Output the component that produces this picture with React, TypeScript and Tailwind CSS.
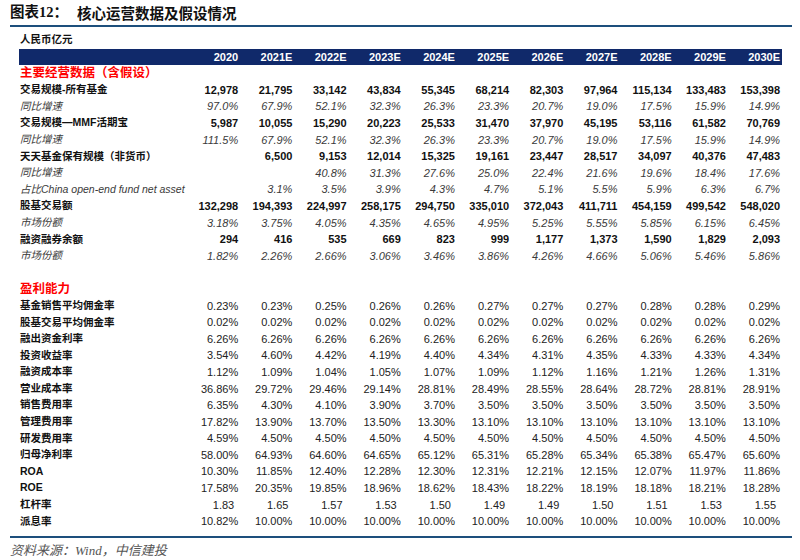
import React from 'react'

type Kind = 'bold' | 'italic' | 'plain' | 'lev'

interface Row {
  label: string
  kind: Kind
  values: string[]
}

const years = ['2020', '2021E', '2022E', '2023E', '2024E', '2025E', '2026E', '2027E', '2028E', '2029E', '2030E']

const rep = (v: string, n: number) => Array(n).fill(v)

const opsRows: Row[] = [
  { label: '交易规模-所有基金', kind: 'bold', values: ['12,978', '21,795', '33,142', '43,834', '55,345', '68,214', '82,303', '97,964', '115,134', '133,483', '153,398'] },
  { label: '同比增速', kind: 'italic', values: ['97.0%', '67.9%', '52.1%', '32.3%', '26.3%', '23.3%', '20.7%', '19.0%', '17.5%', '15.9%', '14.9%'] },
  { label: '交易规模—MMF活期宝', kind: 'bold', values: ['5,987', '10,055', '15,290', '20,223', '25,533', '31,470', '37,970', '45,195', '53,116', '61,582', '70,769'] },
  { label: '同比增速', kind: 'italic', values: ['111.5%', '67.9%', '52.1%', '32.3%', '26.3%', '23.3%', '20.7%', '19.0%', '17.5%', '15.9%', '14.9%'] },
  { label: '天天基金保有规模（非货币）', kind: 'bold', values: ['', '6,500', '9,153', '12,014', '15,325', '19,161', '23,447', '28,517', '34,097', '40,376', '47,483'] },
  { label: '同比增速', kind: 'italic', values: ['', '', '40.8%', '31.3%', '27.6%', '25.0%', '22.4%', '21.6%', '19.6%', '18.4%', '17.6%'] },
  { label: '占比China open-end fund net asset', kind: 'italic', values: ['', '3.1%', '3.5%', '3.9%', '4.3%', '4.7%', '5.1%', '5.5%', '5.9%', '6.3%', '6.7%'] },
  { label: '股基交易额', kind: 'bold', values: ['132,298', '194,393', '224,997', '258,175', '294,750', '335,010', '372,043', '411,711', '454,159', '499,542', '548,020'] },
  { label: '市场份额', kind: 'italic', values: ['3.18%', '3.75%', '4.05%', '4.35%', '4.65%', '4.95%', '5.25%', '5.55%', '5.85%', '6.15%', '6.45%'] },
  { label: '融资融券余额', kind: 'bold', values: ['294', '416', '535', '669', '823', '999', '1,177', '1,373', '1,590', '1,829', '2,093'] },
  { label: '市场份额', kind: 'italic', values: ['1.82%', '2.26%', '2.66%', '3.06%', '3.46%', '3.86%', '4.26%', '4.66%', '5.06%', '5.46%', '5.86%'] },
]

const profitRows: Row[] = [
  { label: '基金销售平均佣金率', kind: 'plain', values: ['0.23%', '0.23%', '0.25%', '0.26%', '0.26%', '0.27%', '0.27%', '0.27%', '0.28%', '0.28%', '0.29%'] },
  { label: '股基交易平均佣金率', kind: 'plain', values: rep('0.02%', 11) },
  { label: '融出资金利率', kind: 'plain', values: rep('6.26%', 11) },
  { label: '投资收益率', kind: 'plain', values: ['3.54%', '4.60%', '4.42%', '4.19%', '4.40%', '4.34%', '4.31%', '4.35%', '4.33%', '4.33%', '4.34%'] },
  { label: '融资成本率', kind: 'plain', values: ['1.12%', '1.09%', '1.04%', '1.05%', '1.07%', '1.09%', '1.12%', '1.16%', '1.21%', '1.26%', '1.31%'] },
  { label: '营业成本率', kind: 'plain', values: ['36.86%', '29.72%', '29.46%', '29.14%', '28.81%', '28.49%', '28.55%', '28.64%', '28.72%', '28.81%', '28.91%'] },
  { label: '销售费用率', kind: 'plain', values: ['6.35%', '4.30%', '4.10%', '3.90%', '3.70%', ...rep('3.50%', 6)] },
  { label: '管理费用率', kind: 'plain', values: ['17.82%', '13.90%', '13.70%', '13.50%', '13.30%', ...rep('13.10%', 6)] },
  { label: '研发费用率', kind: 'plain', values: ['4.59%', ...rep('4.50%', 10)] },
  { label: '归母净利率', kind: 'plain', values: ['58.00%', '64.93%', '64.60%', '64.65%', '65.12%', '65.31%', '65.28%', '65.34%', '65.38%', '65.47%', '65.60%'] },
  { label: 'ROA', kind: 'plain', values: ['10.30%', '11.85%', '12.40%', '12.28%', '12.30%', '12.31%', '12.21%', '12.15%', '12.07%', '11.97%', '11.86%'] },
  { label: 'ROE', kind: 'plain', values: ['17.58%', '20.35%', '19.85%', '18.96%', '18.62%', '18.43%', '18.22%', '18.19%', '18.18%', '18.21%', '18.28%'] },
  { label: '杠杆率', kind: 'lev', values: ['1.83', '1.65', '1.57', '1.53', '1.50', '1.49', '1.49', '1.50', '1.51', '1.53', '1.55'] },
  { label: '派息率', kind: 'plain', values: ['10.82%', ...rep('10.00%', 10)] },
]

const sans = "font-['Liberation_Sans','Noto_Sans_CJK_SC',sans-serif]"

const DataRow: React.FC<{ row: Row }> = ({ row }) => {
  const italic = row.kind === 'italic'
  const labelCls = italic
    ? 'italic font-normal text-[#3a3a3a] text-[10.5px]'
    : 'font-bold text-[#111] text-[10.5px]'
  const valueCls =
    row.kind === 'bold'
      ? 'font-bold text-[#111]'
      : italic
        ? 'italic text-[#3a3a3a]'
        : row.kind === 'lev'
          ? 'text-[#222] pr-[4px]'
          : 'text-[#222]'
  return (
    <div className="grid grid-cols-[165px_repeat(11,54.2px)] h-[16.6px] items-center">
      <div className={`pl-[1px] whitespace-nowrap ${labelCls}`}>{row.label}</div>
      {row.values.map((v, i) => (
        <div key={i} className={`text-right text-[11px] ${valueCls}`}>
          {v}
        </div>
      ))}
    </div>
  )
}

export default function App() {
  return (
    <div className={`w-[800px] h-[560px] bg-white overflow-hidden ${sans}`}>
      {/* title */}
      <div className="h-[25px] flex items-center pl-[10px] font-bold text-[14.5px] text-[#111]">
        <span className="font-['Liberation_Serif','Noto_Sans_CJK_SC',serif] w-[67px]">图表12：</span>
        <span className="font-['Noto_Sans_CJK_SC',sans-serif]">核心运营数据及假设情况</span>
      </div>
      <div className="ml-[10px] w-[782px] h-[2px] bg-[#1d4f7c]" />

      <div className="ml-[19px] w-[763px] pt-[5px]">
        <div className="h-[16.6px] flex items-center pl-[1px] font-bold text-[10.5px] text-[#111]">人民币亿元</div>

        <div className="grid grid-cols-[165px_repeat(11,54.2px)] h-[16.6px] items-center bg-[#10296a]">
          <div />
          {years.map((y) => (
            <div key={y} className="text-right text-[11px] font-bold text-white">
              {y}
            </div>
          ))}
        </div>

        <div className="h-[16.6px] flex items-center pl-[1px] font-bold text-[12.5px] text-[#ff0000]">
          主要经营数据（含假设）
        </div>
        {opsRows.map((r, i) => (
          <DataRow key={`o${i}`} row={r} />
        ))}

        <div className="h-[16.6px]" />
        <div className="h-[16.6px] flex items-center pl-[1px] font-bold text-[12.5px] text-[#ff0000]">盈利能力</div>
        {profitRows.map((r, i) => (
          <DataRow key={`p${i}`} row={r} />
        ))}
      </div>

      <div className="ml-[10px] mt-[6px] w-[782px] h-[2px] bg-[#1d4f7c]" />
      <div className="pl-[10px] h-[26px] flex items-center italic text-[13px] text-[#555] font-['Liberation_Serif','Noto_Sans_CJK_SC',serif]">
        资料来源：Wind，中信建投
      </div>
    </div>
  )
}
